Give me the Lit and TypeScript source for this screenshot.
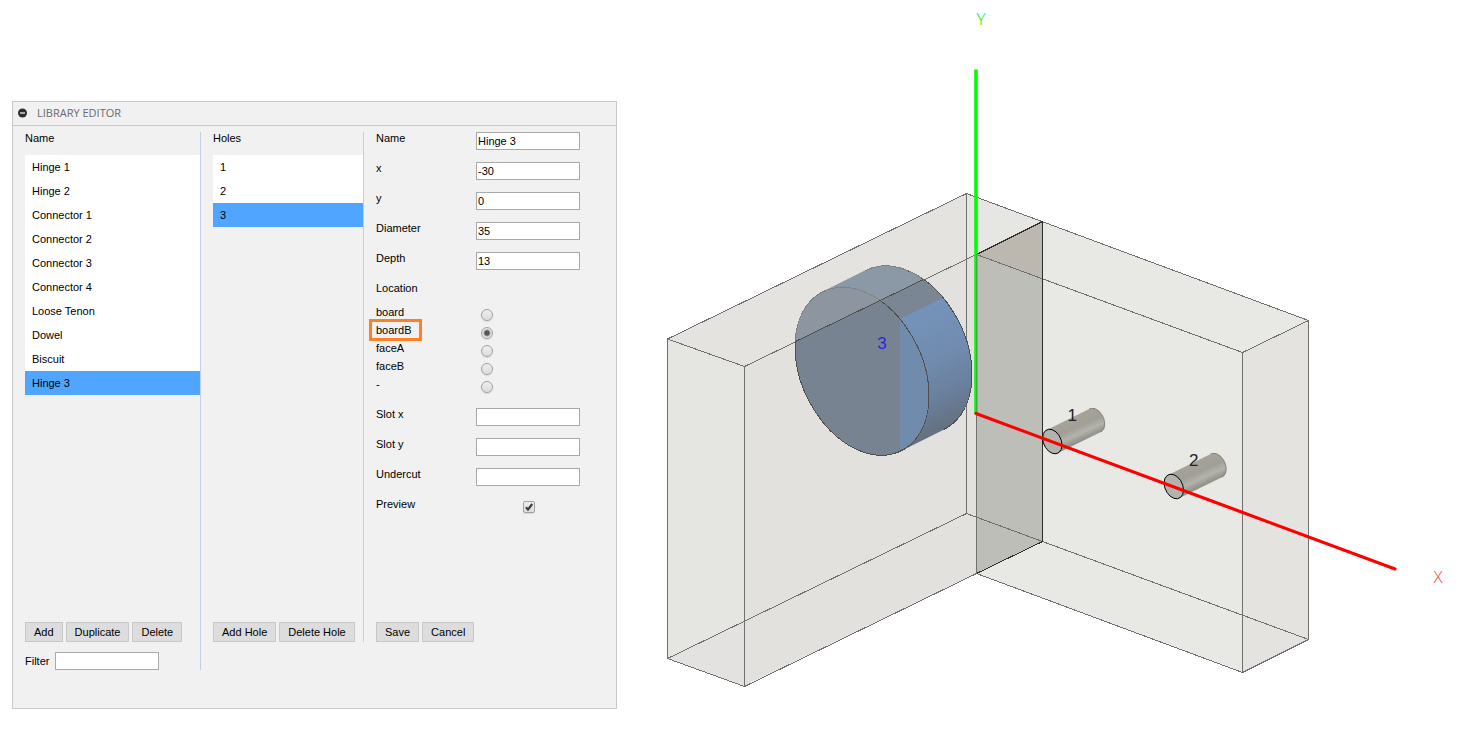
import { LitElement, html, svg, css } from "lit";
import { customElement, property, state } from "lit/decorators.js";
import { classMap } from "lit/directives/class-map.js";

const controls = css`
  *,
  *::after {
    box-sizing: border-box;
  }
  button,
  input {
    margin: 0;
    font: inherit;
    color: inherit;
  }
  .btn {
    height: 20px;
    padding: 0 8px;
    border: 1px solid #c8c8c8;
    background: #dddddd;
    line-height: 18px;
    white-space: nowrap;
  }
  .text {
    width: 104px;
    height: 18px;
    padding: 0 1px;
    border: 1px solid #a9a9a9;
    border-radius: 0;
    background: #ffffff;
  }
`;

@customElement("item-list")
class ItemList extends LitElement {
  static styles = [
    controls,
    css`
      :host {
        display: block;
      }
      .list {
        margin: 0;
        padding: 0;
        list-style: none;
        background: #ffffff;
      }
      .item {
        display: block;
        width: 100%;
        height: 24px;
        padding: 0 7px;
        border: 0;
        background: none;
        text-align: left;
        line-height: 24px;
      }
      .selected {
        background: #4fa5ff;
      }
    `,
  ];

  @property({ attribute: false }) items: string[] = [];
  @property({ type: Number }) selected = 0;

  render() {
    return html`<ul class="list">
      ${this.items.map(
        (name, i) => html`<li>
          <button
            type="button"
            class=${classMap({ item: true, selected: i === this.selected })}
            @click=${() => (this.selected = i)}
          >${name}</button>
        </li>`
      )}
    </ul>`;
  }
}

@customElement("library-editor")
class LibraryEditor extends LitElement {
  static styles = [
    controls,
    css`
      :host {
        display: block;
        font: 11px/12px "Liberation Sans", Arial, sans-serif;
        color: #000000;
      }
      .panel {
        border: 1px solid #c8c8c8;
        background: #f1f1f1;
      }
      .header {
        display: flex;
        align-items: center;
        gap: 9px;
        height: 24px;
        padding: 0 5px 2px;
        border-bottom: 1px solid #c8c8c8;
      }
      .collapse {
        display: flex;
        padding: 0;
        border: 0;
        background: none;
      }
      .title {
        margin: 0;
        font: 11px/12px "Open Sans", sans-serif;
        color: #6a6a6e;
      }
      .body {
        display: grid;
        grid-template-columns: 176fr 151fr 228fr;
        gap: 12px;
        align-items: start;
        padding: 6px 12px 38px;
      }
      .column {
        border-right: 1px solid #c0cfe8;
      }
      .column.last {
        border-right: 0;
      }
      .heading {
        margin: 0;
        height: 23px;
        font: inherit;
      }
      .content {
        min-height: 490px;
      }
      .actions {
        display: flex;
        gap: 3px;
      }
      .filter {
        display: flex;
        align-items: center;
        gap: 6px;
        margin-top: 10px;
      }
      .row {
        display: grid;
        grid-template-columns: 100px 104px;
        height: 18px;
        margin-bottom: 12px;
      }
      .location {
        margin: 0 0 12px;
        padding: 0;
        border: 0;
      }
      .legend {
        padding: 0;
        height: 24px;
      }
      .choice {
        display: grid;
        grid-template-columns: 105px auto;
        height: 18px;
      }
      .marked {
        position: relative;
        justify-self: start;
      }
      .marked::after {
        content: "";
        position: absolute;
        left: -7px;
        right: -11px;
        top: -5px;
        height: 22px;
        border: 3px solid #ff7f27;
      }
      .radio,
      .check {
        appearance: none;
        width: 12px;
        height: 12px;
        margin-top: 3px;
        border: 1px solid #a2a2a2;
        background: linear-gradient(#eeeeee, #dcdcdc);
        box-shadow: 0 1px 1px #d8d8d8;
      }
      .radio {
        border-radius: 50%;
      }
      .radio:checked {
        background: radial-gradient(circle, #555555 0 2px, #e4e4e4 4px);
      }
      .check-wrap {
        display: grid;
        justify-self: center;
        margin-left: 2px;
      }
      .check {
        border-radius: 2px;
        grid-area: 1 / 1;
      }
      .tick {
        grid-area: 1 / 1;
        margin-top: 3px;
        pointer-events: none;
        visibility: hidden;
      }
      .check:checked + .tick {
        visibility: visible;
      }
    `,
  ];

  @state() private items = [
    "Hinge 1", "Hinge 2", "Connector 1", "Connector 2", "Connector 3",
    "Connector 4", "Loose Tenon", "Dowel", "Biscuit", "Hinge 3",
  ];
  @state() private holes = ["1", "2", "3"];
  private places = ["board", "boardB", "faceA", "faceB", "-"];

  private field(label: string, id: string, value = "") {
    return html`<div class="row">
      <label for=${id}>${label}</label>
      <input class="text" id=${id} type="text" .value=${value} />
    </div>`;
  }

  render() {
    return html`<section class="panel">
      <header class="header">
        <button class="collapse" type="button" aria-label="Collapse">
          <svg width="10" height="10" viewBox="0 0 10 10">
            <circle cx="4.5" cy="5" r="4.5" fill="#2d2d2d" />
            <path d="M2 5h5" stroke="#fff" stroke-width="1.2" />
          </svg>
        </button>
        <h1 class="title">LIBRARY EDITOR</h1>
      </header>
      <div class="body">
        <div class="column">
          <div class="content">
            <h2 class="heading">Name</h2>
            <item-list .items=${this.items} .selected=${9}></item-list>
          </div>
          <div class="actions">
            <button class="btn" type="button">Add</button>
            <button class="btn" type="button">Duplicate</button>
            <button class="btn" type="button">Delete</button>
          </div>
          <div class="filter">
            <label for="filter">Filter</label>
            <input class="text" id="filter" type="text" />
          </div>
        </div>
        <div class="column">
          <div class="content">
            <h2 class="heading">Holes</h2>
            <item-list .items=${this.holes} .selected=${2}></item-list>
          </div>
          <div class="actions">
            <button class="btn" type="button">Add Hole</button>
            <button class="btn" type="button">Delete Hole</button>
          </div>
        </div>
        <form class="column last">
          <div class="content">
            ${this.field("Name", "name", "Hinge 3")}
            ${this.field("x", "x", "-30")}
            ${this.field("y", "y", "0")}
            ${this.field("Diameter", "diameter", "35")}
            ${this.field("Depth", "depth", "13")}
            <fieldset class="location">
              <legend class="legend">Location</legend>
              ${this.places.map(
                (place, i) => html`<div class="choice">
                  <label class=${classMap({ marked: i === 1 })} for="place-${i}">${place}</label>
                  <input class="radio" type="radio" name="place" id="place-${i}" ?checked=${i === 1} />
                </div>`
              )}
            </fieldset>
            ${this.field("Slot x", "slot-x")}
            ${this.field("Slot y", "slot-y")}
            ${this.field("Undercut", "undercut")}
            <div class="row">
              <label for="preview">Preview</label>
              <span class="check-wrap">
                <input class="check" id="preview" type="checkbox" checked />
                <svg class="tick" width="12" height="12" viewBox="0 0 12 12">
                  <path d="M3 6.2 5 8.6 9.2 3" fill="none" stroke="#3c3c3c" stroke-width="2.2" />
                </svg>
              </span>
            </div>
          </div>
          <div class="actions">
            <button class="btn" type="button">Save</button>
            <button class="btn" type="button">Cancel</button>
          </div>
        </form>
      </div>
    </section>`;
  }
}

@customElement("joint-preview")
class JointPreview extends LitElement {
  static styles = css`
    :host {
      display: block;
    }
    .scene {
      display: block;
      width: 100%;
      height: auto;
    }
    .edge {
      fill: none;
      stroke: #70706e;
      stroke-width: 1;
      shape-rendering: crispEdges;
      vector-effect: non-scaling-stroke;
    }
    .dark {
      stroke: #2b2b2a;
    }
    .soft {
      stroke: #85817a;
    }
    .rim {
      stroke: #4f4e4b;
    }
    .pin-rim {
      stroke: #000000;
    }
    .label {
      font: 300 17px "Open Sans", sans-serif;
      text-anchor: middle;
    }
    .hole-label {
      font: 17px "Liberation Sans", Arial, sans-serif;
      text-anchor: middle;
    }
  `;

  private pin(x: number, y: number, label: string) {
    return svg`<g transform="translate(${x} ${y})">
      <rect x="-15" y="-40" width="80" height="60" fill="url(#pin)" clip-path="url(#pin-body)" />
      <g clip-path="url(#pin-end)">
        <circle class="edge soft" r="1" transform="matrix(9.7 3.5 0 11.8 42.7 -21)" />
      </g>
      <circle r="1" transform="matrix(9.7 3.5 0 11.8 0 0)" fill="#b2b3ad" />
      <circle class="edge pin-rim" r="1" transform="matrix(9.7 3.5 0 11.8 0 0)" />
      <text class="hole-label" x="20" y="-21" fill="#222">${label}</text>
    </g>`;
  }

  render() {
    return html`<svg class="scene" viewBox="641 0 833 730" role="img" aria-label="Joint preview">
      <defs>
        <linearGradient id="pin" gradientUnits="userSpaceOnUse" x1="16" y1="-20" x2="26" y2="2">
          <stop offset="0" stop-color="#a5a29a" />
          <stop offset="0.35" stop-color="#a09e96" />
          <stop offset="0.65" stop-color="#b3b4ad" />
          <stop offset="0.85" stop-color="#9c9a93" />
          <stop offset="1" stop-color="#8f8d86" />
        </linearGradient>
        <linearGradient id="side" gradientUnits="userSpaceOnUse" x1="943" y1="298" x2="995" y2="403">
          <stop offset="0" stop-color="#7593ba" />
          <stop offset="0.45" stop-color="#708bae" />
          <stop offset="0.75" stop-color="#6a7f9c" />
          <stop offset="1" stop-color="#647180" />
        </linearGradient>
        <clipPath id="above">
          <path d="M744 366.5 976.5 254V180H744Z" />
        </clipPath>
        <clipPath id="open">
          <path d="M900 460V319L943 298 990 275V460Z" />
        </clipPath>
        <clipPath id="body">
          <circle r="1" transform="matrix(67 24.6 0 80.3 905 349.8)" />
          <path d="M822.7 291.8 865.7 270.3 944.3 429.3 901.3 450.8Z" />
        </clipPath>
        <clipPath id="face">
          <circle r="1" transform="matrix(67 24.6 0 80.3 862 371.3)" />
        </clipPath>
        <clipPath id="back-rim">
          <path d="M865 269V255H985V440L944 430.5Z" />
        </clipPath>
        <clipPath id="pin-body">
          <circle r="1" transform="matrix(9.7 3.5 0 11.8 42.7 -21)" />
          <path d="M-5.7-11.6 37-32.6 48.4-9.4 5.7 11.6Z" />
        </clipPath>
        <clipPath id="pin-end">
          <path d="M36-34H60V-4L48-9Z" />
        </clipPath>
      </defs>

      <path d="M667.5 339 966.5 194 1042.5 222 976.5 254V573.5L744 686 667.5 658.5Z" fill="#e2e1de" />
      <path d="M667.5 339 744 366.5 976.5 254 1042.5 222 966.5 194Z" fill="#e4e3df" />
      <path d="M667.5 339 744 366.5V686L667.5 658.5Z" fill="#e5e6e2" />
      <path d="M667.5 658.5 744 622V686Z" fill="#e4e2e1" />
      <path d="M966.5 194 1042.5 222 976.5 254 966.5 258Z" fill="#e6e7e2" />
      <path d="M1042.5 222 1308.5 320V639.5L1242.5 672 976.5 573.5V254Z" fill="#e8e8e4" />
      <path d="M1242.5 352 1308.5 320V639.5L1242.5 672Z" fill="#e4e3df" />
      <path d="M976.5 254 1042.5 222V541L976.5 573.5Z" fill="#bebeb8" />
      <path d="M976.5 254 1042.5 222V278Z" fill="#bcb8b0" />

      <path class="edge" d="M667.5 339V658.5L744.5 686.5V366.5L667.5 339 966.5 193.5V513.5L667.5 658.5" />
      <path class="edge" d="M744.5 366.5 976.5 254.5M744.5 686.5 976.5 573.5" />
      <path class="edge" d="M966.5 193.5 1308.5 320.5V639.5L966.5 513.5" />
      <path class="edge" d="M976.5 254.5 1242.5 352.5V672.5L976.5 573.5" />
      <path class="edge" d="M1242.5 352.5 1308.5 320.5M1242.5 672.5 1308.5 639.5" />
      <path class="edge dark" d="M976.5 254.5 1042.5 221.5V541.5L976.5 573.5" />
      <path class="edge" d="M976.5 413V573.5" />

      <g clip-path="url(#body)">
        <rect x="790" y="260" width="190" height="200" fill="#7b8695" />
        <rect x="790" y="260" width="190" height="200" fill="#8b98a5" clip-path="url(#above)" />
        <rect x="790" y="260" width="190" height="200" fill="url(#side)" clip-path="url(#open)" />
      </g>
      <g clip-path="url(#face)">
        <rect x="790" y="260" width="110" height="200" fill="#788391" />
        <rect x="900" y="260" width="40" height="200" fill="#718bac" />
        <rect x="790" y="260" width="150" height="200" fill="#8d95a0" clip-path="url(#above)" />
      </g>
      <g clip-path="url(#back-rim)">
        <circle class="edge rim" r="1" transform="matrix(67 24.6 0 80.3 905 349.8)" />
      </g>
      <circle class="edge rim" r="1" transform="matrix(67 24.6 0 80.3 862 371.3)" />
      <g clip-path="url(#above)">
        <g clip-path="url(#back-rim)">
          <circle class="edge soft" r="1" transform="matrix(67 24.6 0 80.3 905 349.8)" />
        </g>
        <circle class="edge soft" r="1" transform="matrix(67 24.6 0 80.3 862 371.3)" />
      </g>
      <path class="edge rim" d="M795.5 341.5 923.5 279.5" />
      <text class="hole-label" x="882" y="349" fill="#2a2ad8">3</text>

      <path d="M976 69.5V413.5" stroke="#00ff00" stroke-width="3.6" />
      <path class="edge" d="M976.5 254V412" stroke-opacity="0.6" />
      ${this.pin(1052.3, 441.5, "1")}
      ${this.pin(1173.8, 486.5, "2")}
      <path d="M976 413.5 1395 569" stroke="#ff0000" stroke-width="3.2" stroke-linecap="round" />
      <text class="label" x="981" y="25" fill="#00ee00">Y</text>
      <text class="label" x="1438" y="583" fill="#ff4040">X</text>
    </svg>`;
  }
}

@customElement("app-root")
class AppRoot extends LitElement {
  static styles = css`
    :host {
      display: block;
      background: #ffffff;
    }
    .layout {
      display: grid;
      grid-template-columns: 605fr 833fr;
      gap: 24px;
      align-items: start;
      padding-left: 12px;
    }
    .editor {
      margin-top: 101px;
    }
  `;

  render() {
    return html`<main class="layout">
      <library-editor class="editor"></library-editor>
      <joint-preview></joint-preview>
    </main>`;
  }
}
